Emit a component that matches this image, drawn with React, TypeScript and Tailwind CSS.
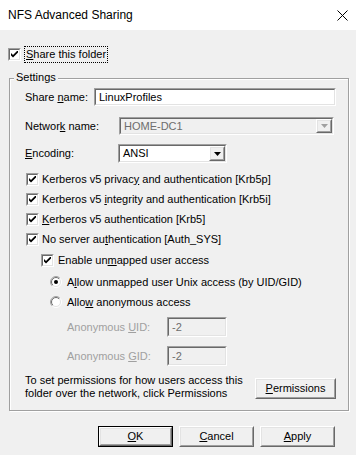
import React from "react";

const font = "font-['Liberation_Sans',Arial,sans-serif]";

function Sunken({ className = "", inner = "", children }: { className?: string; inner?: string; children?: React.ReactNode }) {
  return (
    <div className={`border border-t-[#a0a0a0] border-l-[#a0a0a0] border-r-white border-b-white ${className}`}>
      <div className={`h-full w-full border border-t-[#696969] border-l-[#696969] border-r-[#e3e3e3] border-b-[#e3e3e3] ${inner}`}>
        {children}
      </div>
    </div>
  );
}

function Raised({ className = "", children }: { className?: string; children?: React.ReactNode }) {
  return (
    <div className={`border border-t-white border-l-white border-r-[#696969] border-b-[#696969] ${className}`}>
      <div className="h-full w-full border border-t-[#e3e3e3] border-l-[#e3e3e3] border-r-[#a0a0a0] border-b-[#a0a0a0] bg-[#f0f0f0] flex items-center justify-center">
        {children}
      </div>
    </div>
  );
}

function Check() {
  return (
    <Sunken className="w-[13px] h-[13px] shrink-0" inner="bg-white flex items-center justify-center">
      <svg width="7" height="7" viewBox="0 0 7 7">
        <path d="M0 2 L0 4.5 L2 6.5 L7 1.5 L7 -1 L2 4 Z" fill="#000" />
      </svg>
    </Sunken>
  );
}

function Radio({ on }: { on?: boolean }) {
  return (
    <svg width="12" height="12" viewBox="0 0 12 12" className="shrink-0">
      <defs>
        <linearGradient id="ro" x1="0" y1="0" x2="1" y2="1">
          <stop offset="0.45" stopColor="#a0a0a0" />
          <stop offset="0.55" stopColor="#ffffff" />
        </linearGradient>
        <linearGradient id="ri" x1="0" y1="0" x2="1" y2="1">
          <stop offset="0.45" stopColor="#696969" />
          <stop offset="0.55" stopColor="#e3e3e3" />
        </linearGradient>
      </defs>
      <circle cx="6" cy="6" r="5.5" fill="none" stroke="url(#ro)" />
      <circle cx="6" cy="6" r="4.5" fill="#fff" stroke="url(#ri)" />
      {on && <circle cx="6" cy="6" r="2" fill="#000" />}
    </svg>
  );
}

function Arrow({ color }: { color: string }) {
  return (
    <svg width="7" height="4" viewBox="0 0 7 4">
      <path d="M0 0 H7 L3.5 4 Z" fill={color} />
    </svg>
  );
}

function Button({ children, def, className = "" }: { children: React.ReactNode; def?: boolean; className?: string }) {
  if (def) {
    return (
      <div className={`border border-[#000] ${className}`}>
        <Raised className="h-full w-full">{children}</Raised>
      </div>
    );
  }
  return <Raised className={className}>{children}</Raised>;
}

export default function App() {
  return (
    <div className={`w-[356px] h-[455px] ${font} text-[11px] leading-[13px] text-black bg-[#f0f0f0] flex flex-col`}>
      {/* Title bar */}
      <div className="h-[30px] bg-white flex items-center justify-between pl-[8px] pr-[8px]">
        <span className="text-[12px]">NFS Advanced Sharing</span>
        <svg width="11" height="11" viewBox="0 0 11 11">
          <path d="M0.5 0.5 L10.5 10.5 M10.5 0.5 L0.5 10.5" stroke="#000" strokeWidth="1" />
        </svg>
      </div>

      {/* Share this folder */}
      <div className="mt-[17px] ml-[8px] h-[15px] flex items-center">
        <Check />
        <span className="ml-[4px] px-[1px] py-[1px] outline-1 outline-dotted outline-black">
          <u>S</u>hare this folder
        </span>
      </div>

      {/* Settings group */}
      <div className="relative mt-[16px] ml-[9px] w-[340px] border border-[#a0a0a0] shadow-[inset_1px_1px_0_#fff,1px_1px_0_#fff] pl-[15px] pr-[12px] pb-[10px]">
        <span className="absolute left-[4px] top-[-8px] px-[2px] bg-[#f0f0f0]">Settings</span>

        <div className="mt-[9px] h-[18px] flex items-center">
          <span className="w-[69px]">
            Share <u>n</u>ame:
          </span>
          <Sunken className="flex-1 h-full" inner="bg-white flex items-center pl-[3px]">
            LinuxProfiles
          </Sunken>
        </div>

        <div className="mt-[11px] h-[18px] flex items-center">
          <span className="w-[94px]">
            Networ<u>k</u> name:
          </span>
          <Sunken className="w-[215px] h-full" inner="bg-[#f0f0f0] flex items-center justify-between">
            <span className="pl-[3px] text-[#6d6d6d]">HOME-DC1</span>
            <Raised className="w-[16px] h-full">
              <Arrow color="#a0a0a0" />
            </Raised>
          </Sunken>
        </div>

        <div className="mt-[9px] h-[19px] flex items-center">
          <span className="w-[93px]">
            <u>E</u>ncoding:
          </span>
          <Sunken className="w-[109px] h-full" inner="bg-white flex items-center justify-between">
            <span className="pl-[3px]">ANSI</span>
            <Raised className="w-[16px] h-full">
              <Arrow color="#000" />
            </Raised>
          </Sunken>
        </div>

        <div className="mt-[6px] flex flex-col pl-[1px]">
          <div className="h-[20px] flex items-center gap-[3px]">
            <Check />
            <span>
              Kerberos v5 privac<u>y</u> and authentication [Krb5p]
            </span>
          </div>
          <div className="h-[20px] flex items-center gap-[3px]">
            <Check />
            <span>
              Kerberos v5 <u>i</u>ntegrity and authentication [Krb5i]
            </span>
          </div>
          <div className="h-[20px] flex items-center gap-[3px]">
            <Check />
            <span>
              <u>K</u>erberos v5 authentication [Krb5]
            </span>
          </div>
          <div className="h-[20px] flex items-center gap-[3px]">
            <Check />
            <span>
              No server au<u>t</u>hentication [Auth_SYS]
            </span>
          </div>
        </div>

        <div className="mt-[1px] h-[20px] flex items-center gap-[4px] pl-[16px]">
          <Check />
          <span>
            Enable un<u>m</u>apped user access
          </span>
        </div>

        <div className="mt-[2px] h-[20px] flex items-center gap-[5px] pl-[25px]">
          <Radio on />
          <span>
            A<u>l</u>low unmapped user Unix access (by UID/GID)
          </span>
        </div>
        <div className="h-[20px] flex items-center gap-[5px] pl-[25px]">
          <Radio />
          <span>
            Allo<u>w</u> anonymous access
          </span>
        </div>

        <div className="mt-[5px] h-[20px] flex items-center pl-[42px] text-[#a0a0a0]">
          <span className="w-[100px]">
            Anonymous <u>U</u>ID:
          </span>
          <Sunken className="w-[60px] h-full" inner="bg-[#f0f0f0] flex items-center pl-[3px] text-[#6d6d6d]">
            -2
          </Sunken>
        </div>
        <div className="mt-[9px] h-[20px] flex items-center pl-[42px] text-[#a0a0a0]">
          <span className="w-[100px]">
            Anonymous <u>G</u>ID:
          </span>
          <Sunken className="w-[60px] h-full" inner="bg-[#f0f0f0] flex items-center pl-[3px] text-[#6d6d6d]">
            -2
          </Sunken>
        </div>

        <div className="mt-[8px] flex items-start justify-between">
          <div>
            <div>To set permissions for how users access this</div>
            <div>folder over the network, click Permissions</div>
          </div>
          <Button className="mt-[4px] w-[81px] h-[21px]">
            <span>
              <u>P</u>ermissions
            </span>
          </Button>
        </div>
      </div>

      {/* Footer buttons */}
      <div className="mt-[15px] flex justify-end gap-[6px] pr-[21px]">
        <Button def className="w-[75px] h-[21px]">
          <span>
            <u>O</u>K
          </span>
        </Button>
        <Button className="w-[75px] h-[21px]">
          <span>
            <u>C</u>ancel
          </span>
        </Button>
        <Button className="w-[75px] h-[21px]">
          <span>
            <u>A</u>pply
          </span>
        </Button>
      </div>
    </div>
  );
}
